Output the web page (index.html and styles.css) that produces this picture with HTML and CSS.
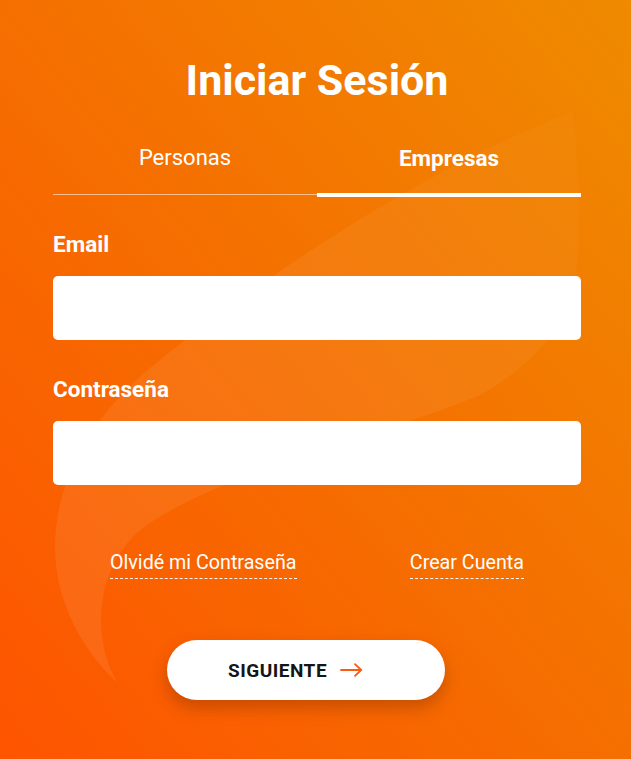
FILE: index.html
```html
<!DOCTYPE html>
<html lang="es">
<head>
<meta charset="utf-8">
<title>Iniciar Sesión</title>
<link rel="stylesheet" href="styles.css">
</head>
<body>
<div class="page">
  <svg class="swoosh" width="631" height="759" viewBox="0 0 631 759" aria-hidden="true">
    <defs>
      <linearGradient id="sw" x1="0" y1="1" x2="1" y2="0">
        <stop offset="0" stop-color="#ffffff" stop-opacity="0.08"/>
        <stop offset="0.6" stop-color="#ffffff" stop-opacity="0.06"/>
        <stop offset="1" stop-color="#ffffff" stop-opacity="0.02"/>
      </linearGradient>
    </defs>
    <path d="M572 112 C420 170 260 280 160 360 C70 430 40 520 62 595 C75 635 95 662 117 682 C92 640 94 570 140 530 C220 470 400 430 480 395 C540 360 576 320 578 250 C579 200 578 150 572 112 Z" fill="url(#sw)"/>
  </svg>
  <main class="card">
    <h1 class="title">Iniciar Sesión</h1>
    <nav class="tabs">
      <div class="tab">Personas</div>
      <div class="tab active">Empresas</div>
    </nav>
    <form class="form">
      <label class="label">Email</label>
      <div class="input"></div>
      <label class="label second">Contraseña</label>
      <div class="input"></div>
      <div class="links">
        <a class="link">Olvidé mi Contraseña</a>
        <a class="link">Crear Cuenta</a>
      </div>
      <div class="actions">
        <button type="button" class="btn">
          <span>SIGUIENTE</span>
          <svg class="arrow" width="23" height="14" viewBox="0 0 23 14" aria-hidden="true">
            <path d="M1 7 H21 M15 1.2 L21.2 7 L15 12.8" fill="none" stroke="#fa5a12" stroke-width="1.8" stroke-linecap="round" stroke-linejoin="round"/>
          </svg>
        </button>
      </div>
    </form>
  </main>
</div>
</body>
</html>
```
FILE: styles.css
```css
* { box-sizing: border-box; }
html, body { margin: 0; padding: 0; }
body {
  font-family: Roboto, "Noto Sans", sans-serif;
  color: #fff;
}
.page {
  position: relative;
  width: 631px;
  height: 759px;
  overflow: hidden;
  background: linear-gradient(to top right, #fe5400 0%, #f56f00 50%, #ef8b00 100%);
}
.swoosh {
  position: absolute;
  left: 0;
  top: 0;
}
.card {
  position: relative;
  padding: 58px 50px 0 53px;
}
.title {
  margin: 0;
  font-size: 43px;
  line-height: 44px;
  font-weight: 700;
  text-align: center;
}
.tabs {
  display: flex;
  align-items: flex-start;
  margin-top: 44.5px;
}
.tab {
  flex: 1;
  text-align: center;
  font-size: 22px;
  line-height: 22px;
  padding-bottom: 25.5px;
  border-bottom: 1px solid rgba(255,255,255,0.55);
}
.tab.active {
  font-weight: 700;
  font-size: 22.5px;
  padding-bottom: 24.5px;
  border-bottom: 4px solid #fff;
}
.form {
  display: flex;
  flex-direction: column;
}
.label {
  font-size: 22.5px;
  line-height: 21px;
  font-weight: 700;
  margin-top: 36.8px;
}
.label.second { margin-top: 38.8px; }
.input {
  height: 64px;
  margin-top: 21.2px;
  background: #fff;
  border-radius: 5px;
}
.links {
  display: flex;
  justify-content: space-between;
  padding: 0 57px 0 57px;
  margin-top: 68.5px;
}
.link {
  font-size: 19.7px;
  line-height: 19px;
  color: #fff;
  padding-bottom: 6px;
  border-bottom: 1px dashed rgba(255,255,255,0.95);
}
.actions {
  display: flex;
  margin-top: 61px;
  padding-left: 114px;
}
.btn {
  width: 278px;
  height: 60px;
  border: 0;
  border-radius: 30px;
  background: #fff;
  box-shadow: 0 8px 16px rgba(110, 40, 0, 0.35);
  display: flex;
  align-items: center;
  gap: 13px;
  padding: 0 0 0 61px;
  font-family: Roboto, "Noto Sans", sans-serif;
  font-size: 19px;
  font-weight: 700;
  letter-spacing: 0.5px;
  color: #151515;
}
.arrow { display: block; margin-top: -1px; }
```
